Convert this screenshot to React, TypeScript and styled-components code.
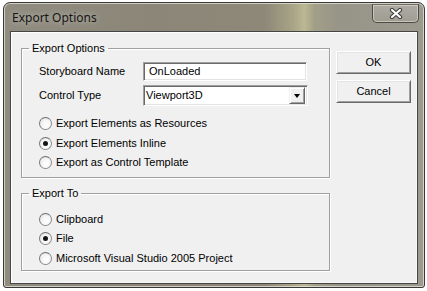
import React from "react";
import styled, {createGlobalStyle} from "styled-components";

const GlobalStyle = createGlobalStyle`
  body {
    margin: 0;
    background: #ffffff;
    font-family: "Liberation Sans", Arial, sans-serif;
  }
`;

const Window = styled.div`
  box-sizing: border-box;
  margin: 2px 0 0 3px;
  width: 422px;
  height: 286px;
  border: 1px solid #383838;
  border-radius: 7px 7px 3px 3px;
  background: linear-gradient(90deg, #908c80 0%, #8b8677 35%, #8d8878 62%, #a9a587 69%, #bcb893 71.5%, #a19e88 74%, #979488 80%, #9c9a8f 100%);
  box-shadow: inset 0 0 0 1px rgba(232, 230, 220, 0.75);
  display: flex;
  flex-direction: column;
  padding: 0 6px 3px 6px;
`;

const TitleBar = styled.div`
  height: 28px;
  display: flex;
  align-items: center;
  justify-content: space-between;
`;

const Title = styled.span`
  padding-left: 2px;
  font-family: "Noto Sans", "Liberation Sans", sans-serif;
  font-size: 12px;
  color: #151515;
  text-shadow: 0 0 6px rgba(255, 255, 255, 0.55);
`;

const CloseButton = styled.div`
  align-self: flex-start;
  margin-top: 1px;
  margin-right: -1px;
  width: 47px;
  height: 19px;
  box-sizing: border-box;
  border: 1px solid #4d4b45;
  border-top-color: #6d6a60;
  border-radius: 0 0 5px 5px;
  background: linear-gradient(180deg, rgba(255, 255, 255, 0.18), rgba(255, 255, 255, 0.05));
  box-shadow: inset 0 0 0 1px rgba(230, 228, 218, 0.55);
  display: flex;
  align-items: center;
  justify-content: center;
`;

const Client = styled.div`
  flex: 1;
  box-sizing: border-box;
  border: 1px solid #454545;
  box-shadow: inset 1px 1px 0 #ffffff, inset -1px -1px 0 #f8f8f8;
  background: #f0f0f0;
  display: grid;
  grid-template-columns: 309px 75px;
  column-gap: 6px;
  align-items: start;
  padding: 10px 0 0 10px;
  font-size: 11px;
  color: #000;
`;

const Groups = styled.div`
  display: flex;
  flex-direction: column;
  gap: 9px;
`;

const Group = styled.fieldset<{ $bottom: number; $top: number }>`
  margin: 0;
  min-width: 0;
  box-sizing: border-box;
  width: 309px;
  padding: ${p => p.$top}px 10px ${p => p.$bottom}px 17px;
  border: 1px solid #a0a0a0;
  box-shadow: 1px 1px 0 #ffffff, inset 1px 1px 0 #ffffff;
`;

const Legend = styled.legend`
  margin-left: -10px;
  padding: 0 3px;
  line-height: 13px;
  font-size: 11px;
`;

const FieldRow = styled.div<{ $gap?: number }>`
  display: grid;
  grid-template-columns: 104px auto;
  align-items: center;
  margin-top: ${p => p.$gap ?? 0}px;
`;

const Label = styled.span`
  line-height: 13px;
`;

const Sunken = styled.div<{ $w: number; $h: number }>`
  box-sizing: border-box;
  width: ${p => p.$w}px;
  height: ${p => p.$h}px;
  border: 1px solid;
  border-color: #a0a0a0 #ffffff #ffffff #a0a0a0;
  box-shadow: inset 1px 1px 0 #696969, inset -1px -1px 0 #e3e3e3;
  background: #ffffff;
  display: flex;
  align-items: center;
`;

const FieldText = styled.span<{ $indent: number }>`
  flex: 1;
  padding-left: ${p => p.$indent}px;
  line-height: 13px;
`;

const DropButton = styled.div`
  box-sizing: border-box;
  width: 16px;
  height: 17px;
  margin-right: 2px;
  background: #f0f0f0;
  border: 1px solid;
  border-color: #f0f0f0 #696969 #696969 #f0f0f0;
  box-shadow: inset 1px 1px 0 #ffffff, inset -1px -1px 0 #a0a0a0;
  display: flex;
  align-items: center;
  justify-content: center;
`;

const Arrow = styled.span`
  width: 0;
  height: 0;
  border-left: 3.5px solid transparent;
  border-right: 3.5px solid transparent;
  border-top: 4px solid #000;
  margin-top: 1px;
`;

const RadioList = styled.div<{ $gap: number }>`
  margin-top: ${p => p.$gap}px;
  display: flex;
  flex-direction: column;
`;

const RadioRow = styled.div`
  height: 19.5px;
  display: flex;
  align-items: center;
  gap: 4px;
  line-height: 13px;
  white-space: nowrap;
`;

const RadioDot = styled.span<{ $checked?: boolean }>`
  box-sizing: border-box;
  width: 13px;
  height: 13px;
  border-radius: 50%;
  border: 1px solid #8b8b8b;
  border-top-color: #6f6f6f;
  border-left-color: #767676;
  background: radial-gradient(circle at 60% 62%, #ffffff 0%, #f6f6f6 45%, #dcdcdc 100%);
  display: flex;
  align-items: center;
  justify-content: center;

  &::after {
    content: "";
    display: ${p => (p.$checked ? "block" : "none")};
    width: 5px;
    height: 5px;
    border-radius: 50%;
    background: #151515;
  }
`;

const Buttons = styled.div`
  padding-top: 9px;
  display: flex;
  flex-direction: column;
  gap: 6px;
`;

const Button = styled.div`
  box-sizing: border-box;
  width: 75px;
  height: 23px;
  background: #f0f0f0;
  border: 1px solid;
  border-color: #ffffff #696969 #696969 #ffffff;
  box-shadow: inset 1px 1px 0 #e3e3e3, inset -1px -1px 0 #a0a0a0;
  display: flex;
  align-items: center;
  justify-content: center;
  line-height: 13px;
`;

type RadioItem = { label: string; checked?: boolean };

const optionRadios: RadioItem[] = [
  {label: "Export Elements as Resources"},
  {label: "Export Elements Inline", checked: true},
  {label: "Export as Control Template"},
];

const targetRadios: RadioItem[] = [
  {label: "Clipboard"},
  {label: "File", checked: true},
  {label: "Microsoft Visual Studio 2005 Project"},
];

function Radios({items, gap}: { items: RadioItem[]; gap: number }) {
  return (
    <RadioList $gap={gap}>
      {items.map(r => (
        <RadioRow key={r.label}>
          <RadioDot $checked={r.checked}/>
          {r.label}
        </RadioRow>
      ))}
    </RadioList>
  );
}

function CloseGlyph() {
  return (
    <svg width="14" height="11" viewBox="0 0 14 11">
      <path d="M3 2 L11 9 M11 2 L3 9" stroke="#3a3a3a" strokeWidth="4.2" strokeLinecap="round"/>
      <path d="M3 2 L11 9 M11 2 L3 9" stroke="#ffffff" strokeWidth="2.2" strokeLinecap="round"/>
    </svg>
  );
}

export default function App() {
  return (
    <>
      <GlobalStyle/>
      <Window>
        <TitleBar>
          <Title>Export Options</Title>
          <CloseButton><CloseGlyph/></CloseButton>
        </TitleBar>
        <Client>
          <Groups>
            <Group $top={7} $bottom={4}>
              <Legend>Export Options</Legend>
              <FieldRow>
                <Label>Storyboard Name</Label>
                <Sunken $w={164} $h={19}>
                  <FieldText $indent={5}>OnLoaded</FieldText>
                </Sunken>
              </FieldRow>
              <FieldRow $gap={4}>
                <Label>Control Type</Label>
                <Sunken $w={165} $h={21}>
                  <FieldText $indent={2}>Viewport3D</FieldText>
                  <DropButton><Arrow/></DropButton>
                </Sunken>
              </FieldRow>
              <Radios items={optionRadios} gap={8}/>
            </Group>
            <Group $top={10} $bottom={2}>
              <Legend>Export To</Legend>
              <Radios items={targetRadios} gap={0}/>
            </Group>
          </Groups>
          <Buttons>
            <Button>OK</Button>
            <Button>Cancel</Button>
          </Buttons>
        </Client>
      </Window>
    </>
  );
}
